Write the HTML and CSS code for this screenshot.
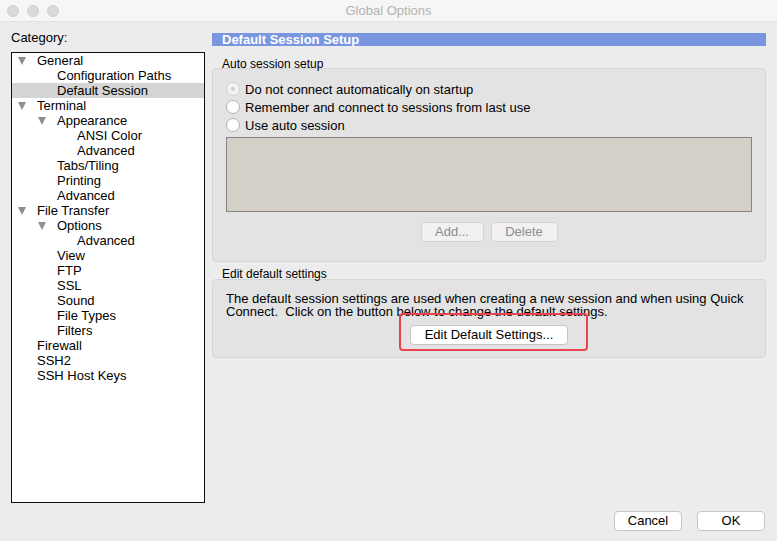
FILE: index.html
```html
<!DOCTYPE html>
<html>
<head>
<meta charset="utf-8">
<link rel="stylesheet" href="styles.css">
</head>
<body>
<div class="window">
  <div class="titlebar">
    <div class="lights"><span class="light"></span><span class="light"></span><span class="light"></span></div>
    <div class="title">Global Options</div>
  </div>
  <div class="content">
    <div class="left">
      <div class="cat-label">Category:</div>
      <div class="tree">
        <div class="row l0"><span class="tog"><i class="tri"></i></span>General</div>
        <div class="row l1"><span class="tog"></span>Configuration Paths</div>
        <div class="row l1 sel"><span class="tog"></span>Default Session</div>
        <div class="row l0"><span class="tog"><i class="tri"></i></span>Terminal</div>
        <div class="row l1"><span class="tog"><i class="tri"></i></span>Appearance</div>
        <div class="row l2"><span class="tog"></span>ANSI Color</div>
        <div class="row l2"><span class="tog"></span>Advanced</div>
        <div class="row l1"><span class="tog"></span>Tabs/Tiling</div>
        <div class="row l1"><span class="tog"></span>Printing</div>
        <div class="row l1"><span class="tog"></span>Advanced</div>
        <div class="row l0"><span class="tog"><i class="tri"></i></span>File Transfer</div>
        <div class="row l1"><span class="tog"><i class="tri"></i></span>Options</div>
        <div class="row l2"><span class="tog"></span>Advanced</div>
        <div class="row l1"><span class="tog"></span>View</div>
        <div class="row l1"><span class="tog"></span>FTP</div>
        <div class="row l1"><span class="tog"></span>SSL</div>
        <div class="row l1"><span class="tog"></span>Sound</div>
        <div class="row l1"><span class="tog"></span>File Types</div>
        <div class="row l1"><span class="tog"></span>Filters</div>
        <div class="row l0"><span class="tog"></span>Firewall</div>
        <div class="row l0"><span class="tog"></span>SSH2</div>
        <div class="row l0"><span class="tog"></span>SSH Host Keys</div>
      </div>
    </div>
    <div class="right">
      <div class="header">Default Session Setup</div>
      <div class="glabel first">Auto session setup</div>
      <div class="gbox box1">
        <div class="radio-row"><span class="radio dim"><span class="dot"></span></span>Do not connect automatically on startup</div>
        <div class="radio-row"><span class="radio"></span>Remember and connect to sessions from last use</div>
        <div class="radio-row"><span class="radio"></span>Use auto session</div>
        <div class="listbox"></div>
        <div class="btn-row">
          <button class="btn disabled add">Add...</button>
          <button class="btn disabled del">Delete</button>
        </div>
      </div>
      <div class="glabel second">Edit default settings</div>
      <div class="gbox box2">
        <p class="desc">The default session settings are used when creating a new session and when using Quick<br>Connect.&nbsp; Click on the button below to change the default settings.</p>
        <div class="btn-row">
          <div class="highlight-wrap">
            <button class="btn edit">Edit Default Settings...</button>
            <span class="highlight"></span>
          </div>
        </div>
      </div>
    </div>
  </div>
  <div class="footer">
    <button class="btn foot">Cancel</button>
    <button class="btn foot">OK</button>
  </div>
</div>
</body>
</html>
```
FILE: styles.css
```css
* { box-sizing: border-box; }
html, body { margin: 0; padding: 0; }
body {
  width: 777px;
  height: 541px;
  background: #ececec;
  font-family: "Liberation Sans", Arial, sans-serif;
  font-size: 13px;
  color: #000;
  overflow: hidden;
}
.window { width: 777px; height: 541px; display: flex; flex-direction: column; }
.titlebar {
  height: 22px;
  background: #f6f6f6;
  border-bottom: 1px solid #e2e2e2;
  position: relative;
  display: flex;
  align-items: center;
  justify-content: center;
}
.lights { position: absolute; left: 7px; top: 5px; display: flex; gap: 8px; }
.light {
  width: 12px; height: 12px; border-radius: 50%;
  background: #dadada; border: 1px solid #cfcfcf;
}
.title { color: #b2b2b2; font-size: 13px; line-height: 22px; }
.content {
  display: grid;
  grid-template-columns: 194px 554px;
  column-gap: 7px;
  padding: 8px 0 0 11px;
  height: 481px;
}
.cat-label { line-height: 16px; height: 16px; margin-bottom: 6px; }
.tree {
  height: 451px;
  background: #fff;
  border: 1px solid #111;
}
.row {
  height: 15px;
  line-height: 15px;
  display: flex;
  align-items: center;
  white-space: nowrap;
}
.row.sel { background: #d5d5d5; }
.row.l1 { padding-left: 20px; }
.row.l2 { padding-left: 40px; }
.tog { width: 25px; height: 15px; flex: none; position: relative; }
.tri {
  position: absolute; left: 6px; top: 4px;
  width: 0; height: 0;
  border-left: 4.5px solid transparent;
  border-right: 4.5px solid transparent;
  border-top: 8px solid #8e8e8e;
}
.right { padding-top: 3px; }
.header {
  height: 13px;
  background: #7b96e0;
  color: #fff;
  font-weight: bold;
  font-size: 13px;
  line-height: 13px;
  padding-left: 10px;
  overflow: hidden;
}
.glabel {
  font-size: 12px;
  line-height: 12px;
  padding-left: 10px;
  position: relative;
  z-index: 1;
}
.glabel.first { margin-top: 12px; margin-bottom: -2px; }
.glabel.second { margin-top: 6px; margin-bottom: -1px; }
.gbox {
  background: #e3e3e3;
  border: 1px solid #d6d6d6;
  border-radius: 4px;
}
.box1 { height: 194px; padding: 11px 13px 0 13px; }
.radio-row {
  height: 18px;
  display: flex;
  align-items: center;
  white-space: nowrap;
}
.radio {
  width: 14px; height: 14px; border-radius: 50%;
  background: #fff; border: 1px solid #b3b3b3;
  margin-right: 5px; flex: none;
  display: flex; align-items: center; justify-content: center;
}
.radio.dim { background: #f3f3f3; border-color: #d2d2d2; }
.dot { width: 4px; height: 4px; border-radius: 50%; background: #cfcfcf; }
.listbox {
  margin-top: 3px;
  height: 75px;
  background: #d4d0c8;
  border: 1px solid #858585;
}
.btn-row { display: flex; justify-content: center; gap: 7px; }
.box1 .btn-row { margin-top: 10px; }
.btn {
  font-family: "Liberation Sans", Arial, sans-serif;
  font-size: 13px;
  height: 20px;
  padding: 0;
  background: #fff;
  border: 1px solid #c6c6c6;
  border-radius: 4px;
  color: #000;
  line-height: 18px;
}
.btn.disabled { background: #f1f1f1; border-color: #d3d3d3; color: #8c8c8c; }
.add { width: 63px; }
.del { width: 67px; }
.box2 { height: 79px; padding: 12px 13px 0 13px; }
.desc { margin: 0; line-height: 13px; white-space: nowrap; }
.box2 .btn-row { margin-top: 7px; }
.highlight-wrap { position: relative; }
.edit { width: 158px; display: block; }
.highlight {
  position: absolute;
  left: -11px; top: -12px; right: -20px; bottom: -6px;
  border: 2.5px solid #e8434f;
  border-radius: 4px;
}
.footer {
  display: flex;
  justify-content: flex-end;
  gap: 15px;
  padding-right: 12px;
  margin-top: 8px;
}
.foot { width: 68px; }
```
